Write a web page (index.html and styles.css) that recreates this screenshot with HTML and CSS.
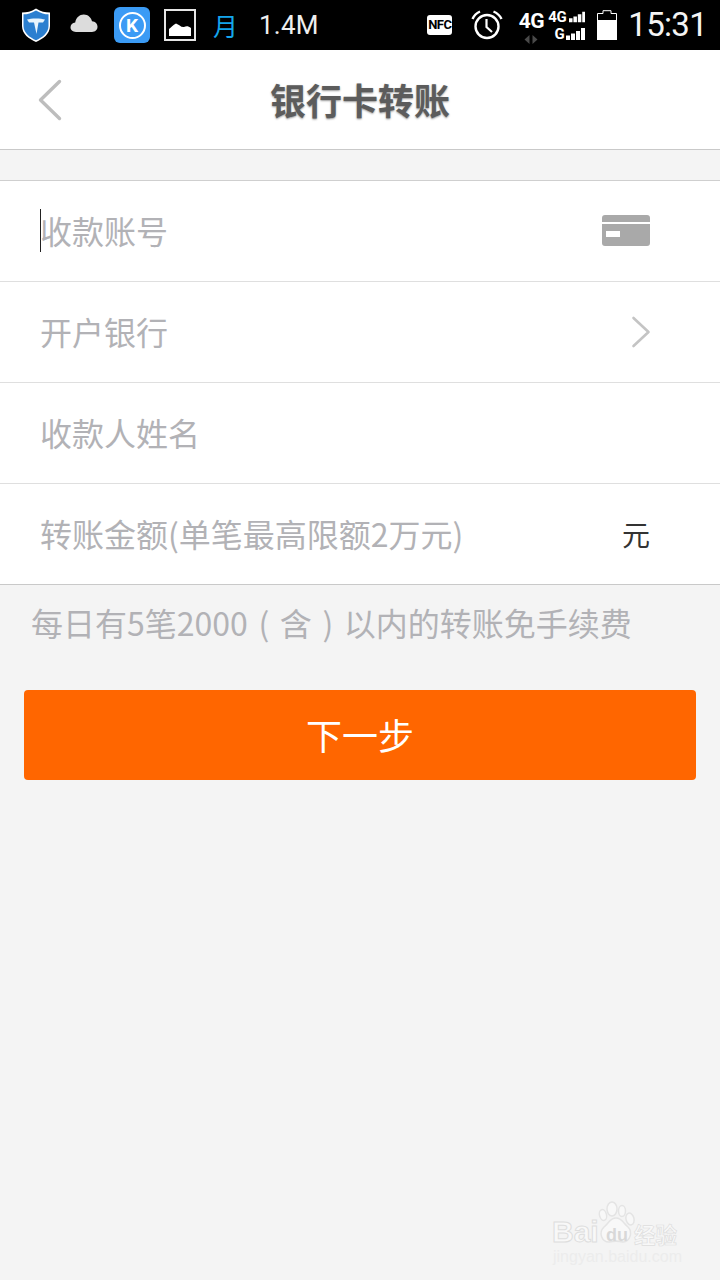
FILE: index.html
```html
<!DOCTYPE html>
<html lang="zh-CN">
<head>
<meta charset="utf-8">
<title>银行卡转账</title>
<link rel="stylesheet" href="styles.css">
</head>
<body>
<div class="status">
  <div class="status-left">
    <svg class="ic-shield" width="32" height="36" viewBox="0 0 32 36"><path d="M16 1.500C21 4.500 25 5.500 30 5.500V19C30 27 23 32 16 35C9 32 2 27 2 19V5.500C7 5.500 11 4.500 16 1.500Z" fill="#fff"/><path d="M16 3.500C21 6.500 24.500 7.300 28.500 7.300V19C28.500 26 22 30.500 16 33.300C10 30.500 3.500 26 3.500 19V7.300C7.500 7.300 11 6.500 16 3.500Z" fill="#2b7fd0"/><path d="M7 12.500C11 11 21 11 25 12.500L23 15.500H18.500L16.500 27L14 15.500H9Z" fill="#e8f4fc"/></svg>
    <svg class="ic-cloud" width="28" height="20" viewBox="0 0 28 20"><path d="M6 19C2.500 19 .5 16.800 .5 14.300C.5 11.600 2.500 9.700 5.200 9.500C6 4.500 9.500 1.500 13.800 1.500C18 1.500 21 4.300 22 8.300C25.300 8.500 27.500 10.800 27.500 13.800C27.500 17 25 19 22 19Z" fill="#dcdcdc"/></svg>
    <div class="ic-k"><span class="k-ring">K</span></div>
    <svg class="ic-pic" width="32" height="32" viewBox="0 0 32 32"><rect x="1" y="1" width="30" height="30" fill="#000" stroke="#e6e6e6" stroke-width="2"/><path d="M5 27V20C7 19 9 15.500 12 14.500C15 15.500 17 18.500 20 18C22 17 24 16.500 27 19V27Z" fill="#fff"/></svg>
    <span class="moon">月</span>
    <span class="speed">1.4M</span>
  </div>
  <div class="status-right">
    <span class="nfc">NFC</span>
    <svg class="ic-alarm" width="32" height="30" viewBox="0 0 32 30"><circle cx="16" cy="16.500" r="11.500" fill="none" stroke="#fff" stroke-width="2.400"/><path d="M15.500 9V17L21 22" fill="none" stroke="#fff" stroke-width="2.200"/><path d="M1.500 9C3 5.500 5.500 3 9 1.500M22.500 1.500C26 3 29 5.500 30.500 9" fill="none" stroke="#fff" stroke-width="2.400"/></svg>
    <div class="net-main">
      <span class="net-4g">4G</span>
      <svg class="net-arrows" width="14" height="9" viewBox="0 0 14 9"><path d="M.5 4.500L5.500 0V9ZM8.500 0L13.500 4.500L8.500 9Z" fill="#4a4a4a"/></svg>
    </div>
    <div class="signals">
      <div class="sig-row"><span class="sig-label">4G</span><svg width="19" height="12" viewBox="0 0 19 12"><path d="M0 7.500H4V12H0ZM5 5.500H9V12H5ZM10 3H14V12H10ZM15 0H19V12H15Z" fill="#fff"/></svg></div>
      <div class="sig-row"><span class="sig-label">G</span><svg width="19" height="12" viewBox="0 0 19 12"><path d="M0 7.500H4V12H0ZM5 5.500H9V12H5ZM10 3H14V12H10ZM15 0H19V12H15Z" fill="#fff"/></svg></div>
    </div>
    <svg class="ic-batt" width="20" height="30" viewBox="0 0 20 30"><path d="M6 .7H14V3.500H19.500V29.500H.5V3.500H6Z" fill="none" stroke="#fff"/><rect x="0" y="10" width="20" height="20" fill="#fff"/></svg>
    <span class="clock">15:31</span>
  </div>
</div>

<header class="topbar">
  <svg class="back" width="26" height="42" viewBox="0 0 26 42"><path d="M22.500 2.500L3.500 21L22.500 39.500" fill="none" stroke="#bdbdbd" stroke-width="3.400" stroke-linecap="round" stroke-linejoin="round"/></svg>
  <h1 class="title">银行卡转账</h1>
</header>

<main class="form">
  <div class="row">
    <span class="ph ph-caret">收款账号</span>
    <svg class="card" width="48" height="31" viewBox="0 0 48 31"><path d="M3 0H45A3 3 0 0 1 48 3V7H0V3A3 3 0 0 1 3 0ZM0 9H48V28A3 3 0 0 1 45 31H3A3 3 0 0 1 0 28ZM4 16V22H18V16Z" fill="#a9a9a9" fill-rule="evenodd"/></svg>
  </div>
  <div class="row">
    <span class="ph">开户银行</span>
    <svg class="chev" width="20" height="32" viewBox="0 0 20 32"><path d="M2.500 2L17.500 16L2.500 30" fill="none" stroke="#c4c4c4" stroke-width="2.600" stroke-linecap="round" stroke-linejoin="round"/></svg>
  </div>
  <div class="row">
    <span class="ph">收款人姓名</span>
  </div>
  <div class="row">
    <span class="ph">转账金额(单笔最高限额2万元)</span>
    <span class="unit">元</span>
  </div>
</main>

<p class="hint">每日有5笔2000<span class="paren">(</span>含<span class="paren">)</span>以内的转账免手续费</p>
<button class="next" type="button">下一步</button>

<div class="mark">
  <svg class="paw" width="40" height="44" viewBox="0 0 40 44"><g fill="#f8f8f8" stroke="#e4e4e4" stroke-width="1.500"><ellipse cx="6" cy="14" rx="3.500" ry="5.500" transform="rotate(-15 6 14)"/><ellipse cx="15" cy="8" rx="5" ry="7"/><ellipse cx="25" cy="10" rx="3.500" ry="5.500"/><ellipse cx="33" cy="18" rx="4" ry="6" transform="rotate(-15 33 18)"/><path d="M19 17C25 17 26 22 31 26C36 31 33 41 26 41C22 40 16 40 12 41C5 41 1 32 7 26C12 22 13 17 19 17Z"/></g></svg>
  <div class="mark-main"><span class="mark-bai">Bai</span><span class="mark-du">du</span><span class="mark-jy">经验</span></div>
  <div class="mark-url">jingyan.baidu.com</div>
</div>
</body>
</html>
```

FILE: styles.css
```css
* { box-sizing: border-box; }
html, body { margin: 0; padding: 0; }
body {
  width: 720px;
  height: 1280px;
  position: relative;
  overflow: hidden;
  background: #f4f4f4;
  font-family: "Noto Sans CJK SC", "Roboto", sans-serif;
}

.status {
  height: 50px;
  background: #000;
  display: flex;
  align-items: center;
  justify-content: space-between;
  padding: 0 13px 0 20px;
  color: #fff;
}
.status-left, .status-right { display: flex; align-items: center; }
.ic-shield { margin-right: 18px; }
.ic-cloud { margin: 0 16px 4px 0; }
.ic-k {
  width: 36px; height: 36px;
  background: #3b9bf5;
  border-radius: 6px;
  display: flex; align-items: center; justify-content: center;
  margin-right: 14px;
}
.k-ring {
  width: 27px; height: 27px;
  border: 2px solid #fff;
  border-radius: 50%;
  font: bold 19px/23px "Roboto", sans-serif;
  text-align: center;
  color: #fff;
}
.ic-pic { margin-right: 17px; }
.moon { color: #14a5ec; font-size: 25px; line-height: 32px; margin-right: 21px; }
.speed { font: 400 26px/32px "Roboto", sans-serif; color: #eee; letter-spacing: .2px; }

.nfc {
  width: 25px; height: 20px;
  background: #fff; color: #000;
  border-radius: 3px;
  font: bold 13px/20px "Roboto", sans-serif;
  text-align: center;
  letter-spacing: -.6px;
  margin-right: 19px;
}
.ic-alarm { margin-right: 16px; }
.net-main { display: flex; flex-direction: column; align-items: center; width: 24px; margin-right: 5px; padding-top: 4px; }
.net-4g { font: bold 21px/20px "Roboto", sans-serif; letter-spacing: -.5px; }
.net-arrows { margin-top: 4px; }
.signals { display: flex; flex-direction: column; gap: 5px; margin: 1px 12px 0 0; width: 37px; }
.sig-row { display: flex; align-items: flex-end; justify-content: flex-end; gap: 2px; height: 12px; }
.sig-label { font: bold 15px/12px "Roboto", sans-serif; letter-spacing: -.3px; }
.ic-batt { margin-right: 11px; }
.clock { font: 400 33px/40px "Roboto", sans-serif; color: #f4f4f4; letter-spacing: -.7px; }

.topbar {
  height: 100px;
  background: #fff;
  border-bottom: 1px solid #c9c9c9;
  position: relative;
  display: flex;
  align-items: center;
  justify-content: center;
}
.back { position: absolute; left: 37px; top: 29px; }
.title {
  margin: 0 0 2px;
  font-size: 36px;
  font-weight: 700;
  line-height: 50px;
  color: #5c5c5c;
  text-shadow: 0 1px 2px #999;
}

.form {
  margin-top: 30px;
  background: #fff;
  border-top: 1px solid #cfcfcf;
  border-bottom: 1px solid #c9c9c9;
}
.row {
  height: 101px;
  display: flex;
  align-items: center;
  justify-content: space-between;
  padding: 0 70px 0 41px;
  border-bottom: 1px solid #dfdfdf;
}
.row:last-child { border-bottom: 0; height: 100px; }
.ph { font-size: 32px; line-height: 44px; color: #b2b2b6; white-space: nowrap; margin: -3px 0 0 -1px; }
.ph-caret { position: relative; }
.ph-caret::before {
  content: "";
  position: absolute;
  left: 0; top: 1px;
  width: 1px; height: 43px;
  background: #222;
}
.card { margin-top: -2px; }
.unit { font-size: 28px; color: #333; line-height: 40px; margin: -1px 0 0; }
.chev { margin-right: -1px; }

.hint {
  margin: 0;
  padding: 15px 0 0 31px;
  height: 105px;
  font-size: 32px;
  line-height: 44px;
  color: #b2b2b6;
  white-space: nowrap;
}
.paren { display: inline-block; width: 32px; text-align: center; }
.next {
  display: block;
  width: 672px;
  height: 90px;
  margin: 0 24px;
  border: 0;
  border-radius: 4px;
  background: #ff6600;
  color: #fff;
  font: 400 36px/50px "Noto Sans CJK SC", sans-serif;
  padding: 0 0 2px;
}

.mark { position: absolute; left: 552px; top: 1200px; width: 130px; height: 66px; }
.paw { position: absolute; left: 45px; top: 1px; }
.mark-main { position: absolute; left: 0; top: 16px; width: 130px; height: 32px; display: flex; align-items: center; }
.mark-bai { font: bold 30px/32px "Liberation Sans", sans-serif; color: #f8f8f8; -webkit-text-stroke: 1px #dedede; width: 52px; }
.mark-du { position: relative; font: bold 18px/20px "Liberation Sans", sans-serif; color: #d8d8d8; margin: 6px 0 0 2px; width: 28px; }
.mark-jy { font: 700 21.500px/26px "Noto Sans CJK SC", sans-serif; color: #f8f8f8; -webkit-text-stroke: .7px #dedede; margin: 4px 0 0 0; white-space: nowrap; }
.mark-url { position: absolute; left: 1px; top: 48px; font: 16px/18px "Liberation Sans", sans-serif; color: #ececec; white-space: nowrap; letter-spacing: 0; }
```
